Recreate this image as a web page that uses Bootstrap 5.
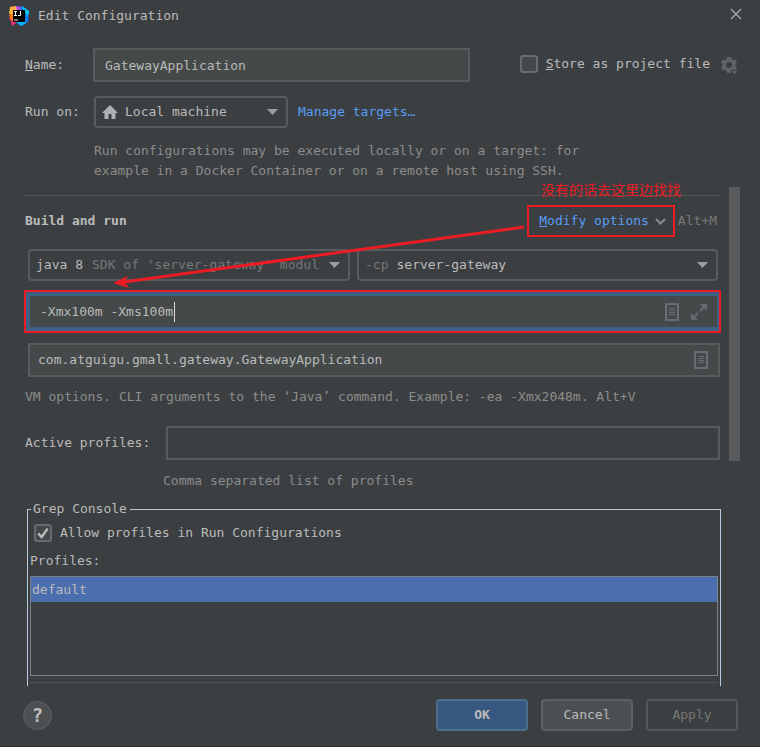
<!DOCTYPE html>
<html lang="en" data-bs-theme="dark">
<head>
<meta charset="utf-8">
<meta name="viewport" content="width=device-width, initial-scale=1">
<title>Edit Configuration</title>
<link href="https://cdn.jsdelivr.net/npm/bootstrap@5.3.0/dist/css/bootstrap.min.css" rel="stylesheet">
<style>
  :root { --pane: #3c3f41; --field: #45494a; --line: #595c5d; --ink: #bbbbbb; --dim: #8c8c8c; --blue: #589df6; --red: #ec1c24; }
  body { background: var(--pane); color: var(--ink); font: 13px/20px "DejaVu Sans Mono", "Liberation Mono", monospace; }
  svg { display: block; flex: none; }
  .dim { color: var(--dim); }
  .dimmer { color: #777777; }
  .title-bar { padding: 6px 18px 0 9px; height: 33px; gap: 9px; }
  .title-bar button, .plain-btn { background: none; border: 0; padding: 0; color: #afb1b3; }
  .head-area { padding: 15px 22px 0 25px; }
  .name-label { width: 68px; flex: none; }
  .run-label { width: 69px; flex: none; }
  .run-row { margin-top: 14px; }
  .store-box { margin-left: 50px; padding-bottom: 3px; gap: 8px; }
  .store-box label { padding-right: 3px; }
  .field { background: var(--field); border: 2px solid var(--line); border-radius: 0; color: var(--ink); height: 34px; font-size: 13px; line-height: 20px; padding: 0 10px; min-width: 0; }
  .field:focus, .bare:focus { outline: 0; }
  .combo { border: 2px solid var(--line); border-radius: 4px; height: 32px; padding: 0 8px 0 6px; min-width: 0; }
  .bare { appearance: none; background: transparent; border: 0; padding: 0; margin: 0; color: var(--ink); font: inherit; min-width: 0; }
  .run-combo { width: 194px; gap: 7px; margin-right: 10px; }
  .run-hint { margin: 13px 0 0 69px; max-width: 540px; }
  .tick { width: 18px; height: 18px; margin: 0; flex: none; border: 2px solid #6b6b6b; border-radius: 3px; background-color: #43494a; }
  .tick:checked { background-color: #43494a; border-color: #6b6b6b; background-size: 14px 14px; background-image: url("data:image/svg+xml,%3Csvg xmlns='http://www.w3.org/2000/svg' viewBox='0 0 14 14'%3E%3Cpath d='M2.2 7.4 5.6 11 11.6 2.6' fill='none' stroke='%23bbbbbb' stroke-width='2.4'/%3E%3C/svg%3E"); }
  a { color: var(--blue); text-decoration: none; }
  .scroll-row { margin-top: 6px; padding: 0 20px 0 24px; gap: 8px; }
  .thumb { width: 11px; height: 274px; background: #595b5d; flex: none; }
  .rule { height: 1px; background: #515455; }
  .note { position: absolute; right: 40px; top: -8px; color: var(--red); font: 14px/20px "Noto Sans CJK SC", sans-serif; white-space: nowrap; }
  .arrow { position: absolute; left: 84px; top: 34px; pointer-events: none; }
  .build-row { margin-top: 9px; padding: 0 4px 0 1px; gap: 3px; }
  .section-name { font-size: 13px; line-height: 20px; color: var(--ink); }
  .modify { border: 2px solid var(--red); height: 32px; padding: 0 7px 0 10px; gap: 6px; }
  .combo-row { margin-top: 12px; padding: 0 3px 0 4px; gap: 7px; }
  .java-combo { width: 322px; flex: none; }
  .java-select { width: 56px; flex: none; }
  .vm-frame { border: 2px solid var(--red); margin-top: 9px; }
  .vm-field { border: 4px solid #3d6185; border-right-width: 2px; background: var(--field); height: 39px; padding: 0 10px; }
  .vm-input { width: 134px; }
  .caret { width: 1px; height: 20px; background: #dddddd; }
  .class-row { margin-top: 10px; padding: 0 1px 0 4px; }
  .main-class { padding: 0 10px 0 8px; }
  .vm-hint { margin: 10px 0 0; padding-left: 1px; }
  .profiles-row { margin-top: 19px; padding: 0 1px; }
  .profiles-label { width: 141px; flex: none; }
  .profiles-hint { margin: 11px 0 0; padding-left: 139px; }
  .grep { margin: 8px 0 0 3px; border: 1px solid #b4cbe2; border-bottom: 0; padding: 0 2px 3px; min-width: 0; }
  .grep legend { float: none; width: auto; font-size: 13px; line-height: 20px; margin: 0 0 0 1px; padding: 0 3px 0 2px; }
  .allow-row { margin: 4px 0 8px 4px; }
  .list-title { margin-bottom: 5px; }
  .list-end { margin-top: 6px; }
  .profile-list { border: 1px solid #7a8288; height: 100px; }
  .profile-list button { background: #4b6eaf; border: 0; color: var(--ink); height: 25px; padding: 0 1px; text-align: left; display: block; width: 100%; }
  .foot { padding: 13px 22px 15px 23px; gap: 13px; border-bottom: 1px solid #2f3133; }
  .act { width: 92px; height: 32px; padding: 0; border: 2px solid #5e6060; border-radius: 4px; background: #4c5052; color: var(--ink); font-size: 13px; line-height: 20px; }
  .act-main { background: #365880; border-color: #4c708c; font-weight: 700; }
  .act:disabled { background: var(--pane); border-color: #555758; color: #777777; opacity: 1; }
  .help { width: 29px; height: 29px; border: 1px solid #5e6060; background: #4c5052; color: var(--ink); border-radius: 50%; padding: 0; font: 700 19px/20px "DejaVu Sans Mono", monospace; }
</style>
</head>
<body>
<header class="title-bar d-flex align-items-start">
  <svg width="20" height="20" viewBox="0 0 20 20" aria-hidden="true">
    <path d="M1 1 7 0 11 3 8 16 3 20 2 15 0 12 2 9Z" fill="#fc317d"/>
    <path d="M1 1 7 0 10 4 4 9 0 8Z" fill="#fdb63c"/>
    <path d="M0 9 4 8 4 15 2 14Z" fill="#f97a12"/>
    <path d="M9 2 13 0 20 5 19 16 12 20 7 16Z" fill="#087cfa"/>
    <path d="M13 0 20 5 19 10 14 4Z" fill="#07c3f2"/>
    <path d="M6 15 12 20 17 17 15 14Z" fill="#07b4f7"/>
    <path d="M7 0 12 1 11 5 8 5Z" fill="#b74af7"/>
    <rect x="4" y="4" width="12" height="12" fill="#000"/>
    <path d="M5 5.500h3M6.500 5.500v4M5 9.500h3M11.500 5v4.500H9M5 14h4" stroke="#fff" fill="none"/>
  </svg>
  <span class="flex-grow-1">Edit Configuration</span>
  <button type="button" aria-label="Close"><svg width="12" height="16" viewBox="0 0 12 16" fill="none" stroke="currentColor" stroke-width="1.200"><path d="M1 3 11 13M11 3 1 13"/></svg></button>
</header>

<main>
  <section class="head-area">
    <div class="d-flex align-items-center">
      <label class="name-label" for="name"><u>N</u>ame:</label>
      <input class="field flex-grow-1" id="name" type="text" value="GatewayApplication">
      <div class="store-box d-flex align-items-center">
        <input class="form-check-input tick" type="checkbox" id="store">
        <label for="store"><u>S</u>tore as project file</label>
        <button class="plain-btn pt-1" type="button" aria-label="Storage settings">
          <svg width="17" height="18" viewBox="0 0 17 18" fill="#606365">
            <path fill-rule="evenodd" d="M6 0h4l.5 2.300 1.500.9L14.200 2.400 16 5.500 14.400 7v2L16 10.500 14.500 13 12 12.500l-1.500 1L10 16H6l-.5-2.500-1.500-.9L1.800 13.500 0 10.400 1.600 9V7L0 5.500 1.800 2.400 4 3.200l1.500-.9ZM8 5a3 3 0 1 0 0 6 3 3 0 0 0 0-6Z"/>
            <path d="M10 13.500h7L13.500 18Z" stroke="#3c3f41" stroke-width=".6"/>
          </svg>
        </button>
      </div>
    </div>
    <div class="run-row d-flex align-items-center">
      <label class="run-label" for="runon">Run on:</label>
      <div class="combo run-combo d-flex align-items-center">
        <svg width="16" height="14" viewBox="0 0 16 14" fill="#afb1b3"><path d="M8 0 16 8H13.500V14H9.500V9H6.500V14H2.500V8H0Z"/></svg>
        <select class="bare flex-grow-1" id="runon"><option>Local machine</option></select>
        <svg width="11" height="6" viewBox="0 0 11 6" fill="#9a9da0"><path d="M0 0H11L5.500 6Z"/></svg>
      </div>
      <a href="#">Manage targets…</a>
    </div>
    <p class="run-hint dim">Run configurations may be executed locally or on a target: for example in a Docker Container or on a remote host using SSH.</p>
  </section>

  <div class="scroll-row d-flex align-items-start">
    <div class="position-relative flex-grow-1 pt-2">
      <div class="rule"></div>
      <div class="note" lang="zh">没有的话去这里边找找</div>

      <div class="build-row d-flex align-items-center">
        <h2 class="section-name fw-bold m-0 flex-grow-1">Build and run</h2>
        <a class="modify d-flex align-items-center" href="#">
          <span><u>M</u>odify options</span>
          <svg width="11" height="7" viewBox="0 0 11 7" fill="none" stroke="#8a8d8f" stroke-width="2"><path d="M1 1 5.500 5.500 10 1"/></svg>
        </a>
        <span class="dimmer">Alt+M</span>
      </div>

      <div class="combo-row d-flex">
        <div class="combo java-combo d-flex align-items-center">
          <select class="bare java-select" id="jre" aria-label="Java version"><option>java 8</option></select>
          <span class="dimmer text-nowrap flex-grow-1">SDK of 'server-gateway' modul</span>
          <svg width="11" height="6" viewBox="0 0 11 6" fill="#9a9da0"><path d="M0 0H11L5.500 6Z"/></svg>
        </div>
        <div class="combo d-flex align-items-center flex-grow-1">
          <label class="dimmer me-2" for="cp">-cp</label>
          <select class="bare flex-grow-1" id="cp"><option>server-gateway</option></select>
          <svg width="11" height="6" viewBox="0 0 11 6" fill="#9a9da0"><path d="M0 0H11L5.500 6Z"/></svg>
        </div>
      </div>

      <div class="vm-frame">
        <div class="vm-field d-flex align-items-center">
          <input class="bare vm-input" type="text" aria-label="VM options" value="-Xmx100m -Xms100m">
          <span class="caret"></span>
          <button class="plain-btn ms-auto me-2 pe-1" type="button" aria-label="Insert macros"><svg width="14" height="18" viewBox="0 0 14 18" fill="none" stroke="#646d72"><path stroke-width="2" d="M1 1H13V17H1Z"/><path d="M4 5.500H10M4 7.500H10M4 9.500H10M4 11.500H10"/></svg></button>
          <button class="plain-btn" type="button" aria-label="Expand"><svg width="16" height="16" viewBox="0 0 16 16" fill="#646d72"><path d="M9 0H16V7ZM0 9V16H7Z"/><path d="M9 7 14 2M2 14 7 9" stroke="#646d72" stroke-width="2"/></svg></button>
        </div>
      </div>

      <div class="class-row">
        <div class="field main-class d-flex align-items-center">
          <input class="bare flex-grow-1" type="text" aria-label="Main class" value="com.atguigu.gmall.gateway.GatewayApplication">
          <button class="plain-btn" type="button" aria-label="Browse classes"><svg width="14" height="18" viewBox="0 0 14 18" fill="none" stroke="#646d72"><path stroke-width="2" d="M1 1H13V17H1Z"/><path d="M4 5.500H10M4 7.500H10M4 9.500H10M4 11.500H10"/></svg></button>
        </div>
      </div>
      <p class="dim vm-hint">VM options. CLI arguments to the ‘Java’ command. Example: -ea -Xmx2048m. Alt+V</p>

      <div class="d-flex align-items-center profiles-row">
        <label class="profiles-label" for="active">Active profiles:</label>
        <input class="field flex-grow-1 bg-transparent" id="active" type="text">
      </div>
      <p class="dim profiles-hint">Comma separated list of profiles</p>

      <fieldset class="grep">
        <legend>Grep Console</legend>
        <div class="d-flex align-items-center allow-row">
          <input class="form-check-input tick" type="checkbox" id="allow" checked>
          <label class="ms-2" for="allow">Allow profiles in Run Configurations</label>
        </div>
        <div class="list-title">Profiles:</div>
        <div class="profile-list"><button type="button">default</button></div>
        <div class="rule list-end"></div>
      </fieldset>

      <svg class="arrow" width="420" height="70" viewBox="0 0 420 70" aria-hidden="true">
        <path d="M416 6 16 61" stroke="#ec1c24" stroke-width="3"/><path d="M5 62 20 55 17 61 21 67Z" fill="#ec1c24"/>
      </svg>
    </div>
    <div class="thumb"></div>
  </div>
</main>

<footer class="foot d-flex align-items-center">
  <button class="help me-auto" type="button" aria-label="Help">?</button>
  <button class="act act-main" type="button">OK</button>
  <button class="act" type="button">Cancel</button>
  <button class="act" type="button" disabled>Apply</button>
</footer>
<script src="https://cdn.jsdelivr.net/npm/bootstrap@5.3.0/dist/js/bootstrap.bundle.min.js"></script>
</body>
</html>
